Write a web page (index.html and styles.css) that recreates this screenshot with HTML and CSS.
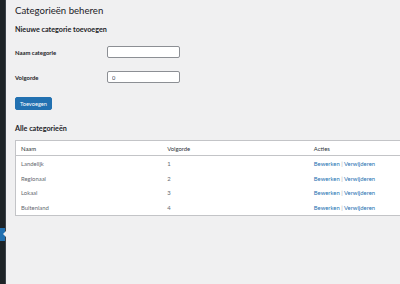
FILE: index.html
```html
<!DOCTYPE html>
<html lang="nl">
<head>
<meta charset="utf-8">
<title>Categorieën beheren</title>
<link rel="stylesheet" href="styles.css">
</head>
<body>
<div class="layout">
  <aside class="sidebar">
    <div class="menu-current"><span class="notch"></span></div>
  </aside>
  <main class="content">
    <h1 class="title">Categorieën beheren</h1>
    <h2 class="section">Nieuwe categorie toevoegen</h2>
    <form class="form">
      <div class="field">
        <label class="label" for="naam">Naam categorie</label>
        <input class="input" id="naam" type="text">
      </div>
      <div class="field">
        <label class="label" for="volgorde">Volgorde</label>
        <input class="input" id="volgorde" type="text" value="0">
      </div>
      <button class="button" type="button">Toevoegen</button>
    </form>
    <h2 class="section section-list">Alle categorieën</h2>
    <table class="table">
      <thead>
        <tr><th>Naam</th><th>Volgorde</th><th>Acties</th></tr>
      </thead>
      <tbody>
        <tr><td>Landelijk</td><td>1</td><td><a href="#">Bewerken</a> <span class="sep">|</span> <a href="#">Verwijderen</a></td></tr>
        <tr><td>Regionaal</td><td>2</td><td><a href="#">Bewerken</a> <span class="sep">|</span> <a href="#">Verwijderen</a></td></tr>
        <tr><td>Lokaal</td><td>3</td><td><a href="#">Bewerken</a> <span class="sep">|</span> <a href="#">Verwijderen</a></td></tr>
        <tr><td>Buitenland</td><td>4</td><td><a href="#">Bewerken</a> <span class="sep">|</span> <a href="#">Verwijderen</a></td></tr>
      </tbody>
    </table>
  </main>
</div>
</body>
</html>
```
FILE: styles.css
```css
html, body {
  margin: 0;
  padding: 0;
  height: 100%;
  overflow: hidden;
  background: #f0f0f1;
  font-family: Lato, "Noto Sans", sans-serif;
  color: #3c434a;
}
.layout {
  display: flex;
  height: 284px;
  width: 520px;
}
.sidebar {
  width: 5px;
  flex: none;
  background: #1d2327;
  border-right: 1px solid #3c434a;
  padding-top: 228px;
}
.menu-current {
  height: 13px;
  background: #2271b1;
  position: relative;
}
.notch {
  position: absolute;
  right: -1px;
  top: 3px;
  width: 0;
  height: 0;
  border-top: 3.5px solid transparent;
  border-bottom: 3.5px solid transparent;
  border-right: 3.5px solid #f0f0f1;
}
.content {
  padding: 0 0 0 9px;
  flex: 1;
}
.title {
  margin: 4px 0 0;
  font-size: 9.6px;
  font-weight: 400;
  line-height: 14px;
  color: #1d2327;
}
.section {
  margin: 7px 0 0;
  font-size: 7.2px;
  font-weight: 700;
  line-height: 10px;
  color: #1d2327;
}
.form {
  display: flex;
  flex-direction: column;
  align-items: flex-start;
  margin-top: 11px;
}
.field {
  display: flex;
  align-items: center;
  height: 12px;
  margin-bottom: 13px;
}
.field + .field {
  margin-bottom: 14px;
}
.label {
  width: 92px;
  font-size: 5.9px;
  font-weight: 700;
  color: #1d2327;
}
.input {
  box-sizing: border-box;
  width: 73px;
  height: 12px;
  margin: 0;
  padding: 0 4px;
  border: 1px solid #8c8f94;
  border-radius: 2px;
  background: #fff;
  font-family: inherit;
  font-size: 5.7px;
  color: #3c434a;
}
.button {
  height: 13px;
  padding: 0 4px;
  border: 1px solid #2271b1;
  border-radius: 2px;
  background: #2271b1;
  color: #fff;
  font-family: inherit;
  font-size: 5.7px;
  line-height: 11px;
}
.section-list {
  margin-top: 14px;
}
.table {
  margin-top: 6px;
  width: 441px;
  table-layout: fixed;
  border-collapse: collapse;
  background: #fff;
  border: 1px solid #c3c4c7;
  font-size: 5.9px;
}
.table th {
  text-align: left;
  font-weight: 400;
  color: #2c3338;
  height: 14px;
  padding: 0 5px;
  border-bottom: 1px solid #c3c4c7;
}
.table td {
  height: 14.75px;
  padding: 0 5px;
  color: #646970;
}
.table a {
  color: #2271b1;
  text-decoration: none;
}
.sep {
  color: #a7aaad;
}
```
